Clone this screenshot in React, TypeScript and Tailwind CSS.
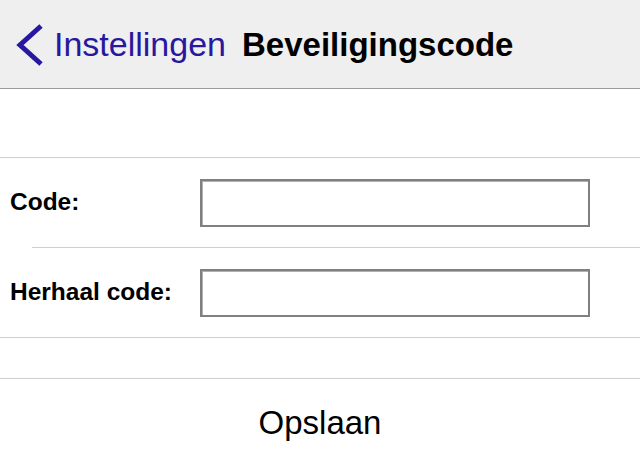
import React from 'react';

const fields = [
  { id: 'code', label: 'Code:' },
  { id: 'repeat', label: 'Herhaal code:' },
];

const App: React.FC = () => {
  return (
    <div className="w-[640px] h-[467px] bg-white overflow-hidden" style={{ fontFamily: '"Liberation Sans", Arial, sans-serif' }}>
      {/* header */}
      <div className="h-[89px] bg-[#efefef] border-b border-[#9a9a9a] flex items-center">
        <svg width="30" height="44" viewBox="0 0 30 44" className="ml-[15px] mt-[1px]">
          <path d="M26 3 L5 22 L26 41" fill="none" stroke="#2818a0" strokeWidth="5" />
        </svg>
        <span className="ml-[9px] text-[34px] text-[#2818a0] leading-none">Instellingen</span>
        <span className="ml-[16px] text-[33px] font-bold text-black leading-none">Beveiligingscode</span>
      </div>

      <div className="h-[68px]" />

      {/* form section */}
      <div className="border-t border-b border-[#cfcfcf]">
        {fields.map((f, i) => (
          <div key={f.id}>
            {i > 0 && <div className="ml-[32px] border-t border-[#cfcfcf]" />}
            <div className="h-[89px] flex items-center">
              <label htmlFor={f.id} className="w-[200px] pl-[10px] text-[24.5px] font-bold text-black">
                {f.label}
              </label>
              <input
                id={f.id}
                type="password"
                className="w-[390px] h-[48px] border-2 border-[#808080] bg-white shadow-[inset_1px_1px_0_#b0b0b0] outline-none"
              />
            </div>
          </div>
        ))}
      </div>

      <div className="h-[40px]" />

      <div className="border-t border-[#cfcfcf] h-[88px] flex items-center justify-center">
        <button className="text-[33px] text-black">Opslaan</button>
      </div>
    </div>
  );
};

export default App;
